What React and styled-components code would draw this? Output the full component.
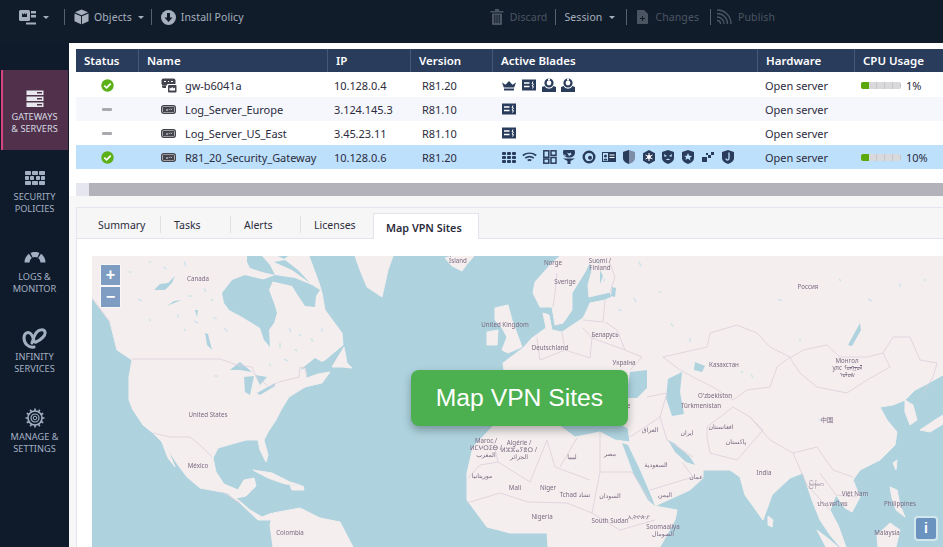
import React from 'react'
import styled, { createGlobalStyle } from 'styled-components'

const navy = '#2a3c5c'

const GlobalStyle = createGlobalStyle`
  html, body { margin: 0; padding: 0; height: 100%; overflow: hidden; background: #f7f7f8; }
  #root { height: 100%; }
  * { box-sizing: border-box; }
`

const Page = styled.div`
  width: 943px;
  height: 547px;
  overflow: hidden;
  display: flex;
  flex-direction: column;
  font-family: "Noto Sans", "Open Sans", sans-serif;
`

const Toolbar = styled.div`
  height: 43px;
  flex: none;
  background: #111c2b;
  display: flex;
  align-items: flex-start;
  justify-content: space-between;
  padding: 9px 168px 0 19px;
`

const ToolGroup = styled.div`
  display: flex;
  align-items: center;
  height: 16px;
`

const ToolItem = styled.div`
  display: flex;
  align-items: center;
  gap: ${props => props.$gap || 5}px;
  font-size: 10.5px;
  letter-spacing: 0.1px;
  color: ${props => (props.$off ? '#4b5562' : '#a6b0bd')};
  svg { flex: none; }
`

const ToolDivider = styled.span`
  width: 1px;
  height: 16px;
  background: #56606e;
  margin: ${props => props.$margin || '0 9px'};
`

const Caret = styled.i`
  width: 0;
  height: 0;
  border-left: 3px solid transparent;
  border-right: 3px solid transparent;
  border-top: 3px solid ${props => props.$color || '#a6b0bd'};
  margin-left: ${props => props.$left || 0}px;
`

const Body = styled.div`
  flex: 1;
  display: flex;
  min-height: 0;
`

const Sidebar = styled.nav`
  width: 69px;
  flex: none;
  background: #0f1b2a;
  padding: 27px 1px 0;
`

const NavItem = styled.div`
  height: 80px;
  display: flex;
  flex-direction: column;
  align-items: center;
  padding-top: 17px;
  gap: 2px;
  background: ${props => (props.$active ? '#50304a' : 'transparent')};
  box-shadow: ${props => (props.$active ? 'inset 2px 0 0 #d6457e' : 'none')};
`

const NavIcon = styled.div`
  height: 22px;
  display: flex;
  align-items: center;
`

const NavLabel = styled.div`
  font-size: 9.2px;
  line-height: 12px;
  text-align: center;
  white-space: pre-line;
  color: ${props => (props.$active ? '#d5dae2' : '#a3b0c4')};
`

const Main = styled.div`
  flex: 1;
  min-width: 0;
  display: flex;
  flex-direction: column;
  padding-left: 7px;
  background: #f7f7f8;
`

const TableArea = styled.div`
  height: 153px;
  flex: none;
  margin-left: -7px;
  padding: 6px 0 0 7px;
  background: #fff;
`

const Row = styled.div`
  display: grid;
  grid-template-columns: 62px 189px 83px 82px 265px 97px 89px;
  height: ${props => (props.$head ? 23 : 24)}px;
  margin-bottom: ${props => (props.$head ? 1 : 0)}px;
  align-items: center;
  background: ${props => props.$bg || '#fff'};
`

const HeadCell = styled.div`
  height: 100%;
  display: flex;
  align-items: center;
  padding-left: ${props => (props.$first ? 7 : 8)}px;
  font-size: 11.5px;
  font-weight: 600;
  color: #fff;
  background: ${navy};
  border-left: 1px solid ${props => (props.$first ? navy : '#44587a')};
`

const Cell = styled.div`
  display: flex;
  align-items: center;
  padding-left: ${props => props.$left || 0}px;
  font-size: 11px;
  letter-spacing: -0.05px;
  color: #2c2c3c;
  justify-content: ${props => (props.$center ? 'center' : 'flex-start')};
  white-space: nowrap;
`

const RowIcon = styled.span`
  width: 24px;
  display: flex;
`

const Blades = styled.div`
  display: flex;
  gap: 5.8px;
  color: ${navy};
  svg { flex: none; display: block; }
`

const Dash = styled.span`
  width: 10px;
  height: 3px;
  background: #a9a9ae;
  border-radius: 1px;
`

const CpuBar = styled.div`
  width: 40px;
  height: 7px;
  border-radius: 2px;
  margin-right: 5px;
  background: repeating-linear-gradient(90deg, #d9d9dc 0 7px, #c6c6ca 7px 8px);
  overflow: hidden;
`

const CpuFill = styled.div`
  height: 100%;
  background: #5aa80c;
`

const ScrollBar = styled.div`
  height: 13px;
  flex: none;
  margin-top: 14px;
  display: flex;
  background: #b3b2bb;
  &::before { content: ''; width: 13px; background: #e6e6f0; }
`

const Panel = styled.section`
  flex: 1;
  min-height: 0;
  margin-top: 11px;
  border: 1px solid #e5e5ef;
  border-right: none;
  border-bottom: none;
  background: #fff;
  display: flex;
  flex-direction: column;
`

const TabBar = styled.div`
  height: 31px;
  flex: none;
  display: flex;
  align-items: flex-end;
  padding-left: 8px;
  background: #f6f6f7;
  border-bottom: 1px solid #e3e3ee;
`

const Tab = styled.div`
  width: ${props => props.$width}px;
  height: 30px;
  display: flex;
  align-items: center;
  padding: 4px 0 0 13px;
  font-size: 10.5px;
  color: #2c2c3c;
`

const ActiveTab = styled(Tab)`
  height: 26px;
  font-size: 10.8px;
  font-weight: 600;
  position: relative;
  top: 1px;
  background: #fff;
  border: 1px solid #e3e3ee;
  border-bottom: none;
  padding: 2px 0 0 12px;
`

const TabSep = styled.span`
  width: 1px;
  height: 17px;
  margin-bottom: 5px;
  background: #e0e0e4;
`

const MapWrap = styled.div`
  flex: 1;
  min-height: 0;
  margin: 17px 0 0 15px;
  position: relative;
  overflow: hidden;
  background: #aed3df;
`

const MapSvg = styled.svg`
  display: block;
  width: 851px;
  height: 291px;
  filter: blur(0.35px);
`

const ZoomBox = styled.div`
  position: absolute;
  left: 8px;
  top: 8px;
  padding: 1px;
  width: 21px;
  background: rgba(255, 255, 255, 0.55);
  border-radius: 3px;
  display: flex;
  flex-direction: column;
  gap: 2px;
`

const ZoomBtn = styled.div`
  height: 20px;
  background: #7f9dc2;
  color: #fff;
  font: bold 16px/19px "Liberation Sans", sans-serif;
  text-align: center;
`

const InfoBtn = styled.div`
  position: absolute;
  right: 7px;
  bottom: 8px;
  width: 20px;
  height: 21px;
  background: #6a94bf;
  border-radius: 2px;
  box-shadow: 0 0 0 2px rgba(255, 255, 255, 0.45);
  color: #fff;
  font: bold 14px/21px "Liberation Sans", sans-serif;
  text-align: center;
`

const CtaButton = styled.div`
  position: absolute;
  left: 319px;
  top: 114px;
  width: 217px;
  height: 56px;
  display: flex;
  align-items: center;
  justify-content: center;
  border-radius: 8px;
  background: #4caf50;
  box-shadow: 0 4px 8px rgba(0, 0, 0, 0.3);
  color: #fff;
  font: 24.7px "Liberation Sans", Arial, sans-serif;
`

// toolbar icons
const GatewayMenuIcon = () => (
  <svg width="17" height="15" viewBox="0 0 17 15" fill="#a6b0bd">
    <rect x="0" y="0" width="11" height="11" rx="1.5" />
    <path d="M3 3l1.5 1.5L5.5 3l1 1.5L8 3v4H3z" fill="#111c2b" />
    <rect x="12" y="1" width="5" height="2.5" />
    <rect x="12" y="5" width="5" height="2.5" />
    <rect x="7" y="12.5" width="10" height="2" />
  </svg>
)

const BoxIcon = () => (
  <svg width="15" height="16" viewBox="0 0 16 16" fill="#a6b0bd">
    <path d="M8 0l7 3-7 3-7-3z" />
    <path d="M0.5 4.2l7 3v8.6l-7-3.2z" />
    <path d="M15.5 4.2l-7 3v8.6l7-3.2z" />
  </svg>
)

const InstallIcon = () => (
  <svg width="15" height="15" viewBox="0 0 15 15">
    <circle cx="7.5" cy="7.5" r="7.5" fill="#a6b0bd" />
    <path d="M6 3h3v4.5h2.5L7.5 12 3.5 7.5H6z" fill="#111c2b" />
  </svg>
)

const TrashIcon = () => (
  <svg width="14" height="16" viewBox="0 0 14 16" fill="#4b5562">
    <rect x="0.5" y="2" width="13" height="1.5" />
    <rect x="5" y="0" width="4" height="2" />
    <path d="M2 4.5h10V15a1 1 0 0 1-1 1H3a1 1 0 0 1-1-1zM4.300 6v8h1V6zm2.200 0v8h1V6zm2.200 0v8h1V6z" fillRule="evenodd" />
  </svg>
)

const ChangesIcon = () => (
  <svg width="11" height="14" viewBox="0 0 11 14" fill="#4b5562">
    <path d="M0 1a1 1 0 0 1 1-1h6l4 4v9a1 1 0 0 1-1 1H1a1 1 0 0 1-1-1z" />
    <path d="M5 6h1v2h2v1H6v2H5V9H3V8h2z" fill="#111c2b" />
  </svg>
)

const RssIcon = () => (
  <svg width="16" height="16" viewBox="0 0 16 16" fill="none" stroke="#4b5562" strokeWidth="1.3">
    <path d="M1 1c8 0 14 6 14 14" />
    <path d="M1 4.500c6 0 10.500 4.500 10.500 10.500" />
    <path d="M1 8c4 0 7 3 7 7" />
    <path d="M1 11.500c2 0 3.500 1.500 3.500 3.500" />
  </svg>
)

// sidebar icons
const ServersIcon = () => (
  <svg width="18" height="17" viewBox="0 0 18 17">
    {[0, 6, 12].map(y => (
      <g key={y}>
        <rect x="0.5" y={y + 0.5} width="17" height="4.5" fill="#e6e8ee" />
        <rect x="11" y={y + 2} width="5" height="1.5" fill="#50304a" />
      </g>
    ))}
  </svg>
)

const WallIcon = () => (
  <svg width="20" height="15" viewBox="0 0 20 15" fill="#a3b0c4">
    {[[0, 6], [7, 6], [14, 6], [0, 4], [5, 4], [11, 4], [16, 4], [0, 6], [7, 6], [14, 6]].map(([x, w], i) => (
      <rect key={i} x={x} y={i < 3 ? 0 : i < 7 ? 5 : 10} width={w} height="4" rx="0.8" />
    ))}
  </svg>
)

const GaugeIcon = () => (
  <svg width="22" height="13" viewBox="0 2.5 22 13" fill="none" stroke="#a3b0c4" strokeWidth="5">
    <path d="M3 13A8 8 0 0 1 6.400 6.400" />
    <path d="M7.600 5.750A8 8 0 0 1 14.400 5.750" />
    <path d="M15.600 6.400A8 8 0 0 1 19 13" />
  </svg>
)

const InfinityIcon = () => (
  <svg width="25" height="21" viewBox="0 0 25 21" fill="none" stroke="#a3b0c4" strokeWidth="3" strokeLinecap="round">
    <path d="M12 19C6 20 2 15 2 10C2 5 6 3 9 6C12 9 11 15 14 14C19 12 24 7 23 4C22 1 17 1 14 5C12 8 11 12 10 15" />
  </svg>
)

const GearIcon = () => (
  <svg width="20" height="20" viewBox="0 0 20 20" fill="none" stroke="#a3b0c4">
    <circle cx="10" cy="10" r="7" strokeWidth="1.6" />
    <circle cx="10" cy="10" r="4" strokeWidth="1.2" />
    <circle cx="10" cy="10" r="1.8" strokeWidth="1" />
    <g strokeWidth="1.6">
      {[0, 30, 60, 90, 120, 150].map(a => (
        <path key={a} d="M10 0.500v2.500M10 17v2.500" transform={`rotate(${a} 10 10)`} />
      ))}
    </g>
  </svg>
)

// table icons
const CheckIcon = () => (
  <svg width="13" height="13" viewBox="0 0 13 13">
    <circle cx="6.5" cy="6.5" r="6.2" fill="#5cb018" />
    <path d="M3.300 6.700l2.300 2.200 4.100-4.300" fill="none" stroke="#fff" strokeWidth="1.7" />
  </svg>
)

const ServerIcon = () => (
  <svg width="15" height="9" viewBox="0 0 15 9">
    <rect x="0.7" y="0.7" width="13.6" height="7.6" rx="2" fill="#f4f4f4" stroke="#44444c" strokeWidth="1.4" />
    <rect x="2" y="2" width="11" height="5" fill="#44444c" />
    <path d="M5 5h2M8 4.800l1-1M10 4.800l1-1" stroke="#fff" strokeWidth="0.9" />
  </svg>
)

const GatewayIcon = () => (
  <svg width="16" height="15" viewBox="0 0 16 15">
    <rect x="0.5" y="0.5" width="14" height="7" rx="2" fill="#44444c" />
    <path d="M3 3.500h2M7 3.500h1M10 3.500h2" stroke="#fff" strokeWidth="1" />
    <path d="M1 7.500h4v2.500H2.500A1.500 1.500 0 0 1 1 8.500z" fill="#44444c" />
    <rect x="6" y="6" width="10" height="9" rx="1" fill="#fff" />
    <rect x="7" y="7" width="8.5" height="7.5" rx="1" fill="#44444c" />
    <path d="M8.500 9.500l1.500 1 1.200-1.500 1.300 1.500 1.500-1v3h-5.500z" fill="#fff" />
  </svg>
)

const CrownBlade = () => (
  <svg width="14" height="14" viewBox="0 0 14 14" fill="currentColor">
    <path d="M0 4.500l3.500 2.300L7 3l3.500 3.800L14 4.500l-1.800 5H1.800z" />
    <rect x="2" y="10.5" width="10" height="2" />
  </svg>
)

const ReportBlade = () => (
  <svg width="14" height="14" viewBox="0 0 14 14">
    <rect y="1.5" width="14" height="11" fill="currentColor" />
    <path d="M2 5h5.500M2 8.500h5.500" stroke="#fff" strokeWidth="1.4" />
    <path d="M11 3.500l-1 2 1.500.5-1.500 2 1.500.5-1 2" stroke="#fff" strokeWidth="1" fill="none" />
  </svg>
)

const RingBlade = () => (
  <svg width="14" height="15" viewBox="0 0 14 15">
    <path d="M0 9l2.500-1a5 5 0 0 0 9 0L14 9v5H0z" fill="currentColor" />
    <circle cx="7" cy="5" r="3.5" fill="none" stroke="currentColor" strokeWidth="2.2" />
    <path d="M6 0.500h2v2H6z" fill="#fff" />
  </svg>
)

const GridBlade = () => (
  <svg width="14" height="14" viewBox="0 0 14 14" fill="currentColor">
    {[2, 6, 10].map(y => [0, 5, 10].map(x => <rect key={`${x}${y}`} x={x} y={y} width="4" height="3" rx="1" />))}
  </svg>
)

const WifiBlade = () => (
  <svg width="15" height="14" viewBox="0 0 15 14" fill="none" stroke="currentColor" strokeWidth="1.7">
    <path d="M0.800 5.500c4-3 9.400-3 13.400 0" />
    <path d="M3.300 8c2.500-1.700 6-1.700 8.400 0" />
    <path d="M5.700 10.500c1-.7 2.600-.7 3.600 0" />
  </svg>
)

const QrBlade = () => (
  <svg width="14" height="14" viewBox="0 0 14 14" fill="none" stroke="currentColor" strokeWidth="1.5">
    <rect x="0.8" y="0.8" width="5" height="6.5" />
    <rect x="8" y="0.8" width="5" height="4.5" />
    <rect x="0.8" y="9" width="5" height="4.2" />
    <rect x="8" y="7.5" width="5" height="5.7" />
  </svg>
)

const GlobeBlade = () => (
  <svg width="14" height="15" viewBox="0 0 14 15" fill="currentColor">
    <path d="M1 1.500a6 6 0 0 1 12 0c0 3-2.500 5-6 5s-6-2-6-5z" transform="translate(0 1)" />
    <path d="M5 2.500l2 1 1.500-1 1 2-2.500 1.500zM2 4.500l2 .5-1 1.500z" fill="#bde0fd" />
    <path d="M1 8.500h12L8.500 11v3h-3v-3z" />
  </svg>
)

const TargetBlade = () => (
  <svg width="14" height="14" viewBox="0 0 14 14">
    <circle cx="7" cy="7" r="5.3" fill="none" stroke="currentColor" strokeWidth="2.4" />
    <circle cx="8" cy="7.8" r="2" fill="currentColor" />
  </svg>
)

const CardBlade = () => (
  <svg width="14" height="14" viewBox="0 0 14 14">
    <rect y="2" width="14" height="10" fill="currentColor" />
    <rect x="1" y="3" width="5" height="8" fill="#bde0fd" />
    <circle cx="3.5" cy="6" r="1.5" fill="currentColor" />
    <path d="M1.500 10.500a2 2 0 0 1 4 0z" fill="currentColor" />
    <path d="M7.500 5h5M7.500 7.500h5" stroke="#fff" strokeWidth="1" />
  </svg>
)

const shield = 'M7 0l6 2v6c0 3-3 5-6 6-3-1-6-3-6-6V2z'

const HalfShieldBlade = () => (
  <svg width="14" height="14" viewBox="0 0 14 14">
    <path d={shield} fill="#7d8da8" />
    <path d="M7 0L1 2v6c0 3 3 5 6 6z" fill="currentColor" />
  </svg>
)

const HexBlade = () => (
  <svg width="14" height="14" viewBox="0 0 14 14">
    <path d="M7 0l6 3.300v7.400L7 14l-6-3.300V3.300z" fill="currentColor" />
    <circle cx="7" cy="7" r="2" fill="#fff" />
    <path d="M7 3v8M3.500 5l7 4M10.500 5l-7 4" stroke="#fff" strokeWidth="1" />
  </svg>
)

const FaceBlade = () => (
  <svg width="14" height="14" viewBox="0 0 14 14">
    <path d={shield} fill="currentColor" />
    <path d="M3 4l3 2-2.500 1zM11 4L8 6l2.500 1zM4.500 10l2.500-1.500L9.500 10z" fill="#bde0fd" />
  </svg>
)

const StarBlade = () => (
  <svg width="14" height="14" viewBox="0 0 14 14">
    <path d={shield} fill="currentColor" />
    <path d="M7 3l1.200 2.700 2.800.3-2.100 1.900.6 2.800L7 8.400l-2.500 1.300.6-2.800L3 6l2.800-.3z" fill="#bde0fd" />
  </svg>
)

const BitsBlade = () => (
  <svg width="14" height="14" viewBox="0 0 14 14" fill="currentColor">
    <rect x="1" y="7" width="5" height="5" />
    <rect x="7" y="5" width="3" height="3" />
    <rect x="10" y="2" width="3" height="3" />
    <rect x="5" y="3" width="2" height="2" />
  </svg>
)

const HookBlade = () => (
  <svg width="14" height="14" viewBox="0 0 14 14">
    <path d={shield} fill="currentColor" />
    <path d="M8 2.500v6a1.500 1.500 0 0 1-3 0" fill="none" stroke="#bde0fd" strokeWidth="1.3" />
  </svg>
)

const columns = ['Status', 'Name', 'IP', 'Version', 'Active Blades', 'Hardware', 'CPU Usage']

const rows = [
  { ok: true, icon: <GatewayIcon />, name: 'gw-b6041a', ip: '10.128.0.4', version: 'R81.20', cpu: 1, bg: '#fff',
    blades: [CrownBlade, ReportBlade, RingBlade, RingBlade] },
  { icon: <ServerIcon />, name: 'Log_Server_Europe', ip: '3.124.145.3', version: 'R81.10', bg: '#f6f7fd',
    blades: [ReportBlade] },
  { icon: <ServerIcon />, name: 'Log_Server_US_East', ip: '3.45.23.11', version: 'R81.10', bg: '#fff',
    blades: [ReportBlade] },
  { ok: true, icon: <ServerIcon />, name: 'R81_20_Security_Gateway', ip: '10.128.0.6', version: 'R81.20', cpu: 10, bg: '#bde0fd',
    blades: [GridBlade, WifiBlade, QrBlade, GlobeBlade, TargetBlade, CardBlade, HalfShieldBlade, HexBlade, FaceBlade, StarBlade, BitsBlade, HookBlade] }
]

const navItems = [
  { icon: <ServersIcon />, label: 'GATEWAYS\n& SERVERS', active: true },
  { icon: <WallIcon />, label: 'SECURITY\nPOLICIES' },
  { icon: <GaugeIcon />, label: 'LOGS &\nMONITOR' },
  { icon: <InfinityIcon />, label: 'INFINITY\nSERVICES' },
  { icon: <GearIcon />, label: 'MANAGE &\nSETTINGS' }
]

// map drawing, in page coordinates
const land = [
  'M92 256H309L319 283L322 293L325 310L342 333L343 345L325 360L300 370L305 368L307 378L318 374L330 372L322 383L305 387L289 397L281 410L276 420L268 432L264 440L268 455L266 462L260 450L258 440L246 440L232 444L218 448L213 458L216 472L224 484L238 490L244 480L254 478L256 486L246 496L236 498L250 510L262 517L272 513L272 520L258 520L240 503L227 493L200 488L187 477L178 465L165 445L153 433L143 425L133 410L129 400L129 377L132 360L117 350L110 322L92 298Z',
  'M355 256H393L388 270L382 297L367 287L360 270Z',
  'M445 258L452 256H474L467 264L462 271L452 266Z',
  'M495 308L508 305L512 320L522 347L508 353L502 350L507 337L502 328L495 320Z',
  'M487 332L498 330L497 345L487 345Z',
  'M332 367L344 347L347 363L352 368L342 367Z',
  'M253 470L272 473L290 482L300 485L285 484L268 478Z',
  'M290 485L303 486L304 490L292 490Z',
  'M160 437L166 445L175 467L168 458Z',
  'M273 513L300 508L320 518L340 522L353 547H273L270 525Z',
  'M943 256H560L552 263L535 282L533 293L540 307L552 307L555 325L563 323L572 310L572 293L585 272L590 262L592 270L588 285L589 297L610 292L612 297L605 300L590 303L587 310L583 318L562 332L552 330L549 315L543 313L546 328L532 338L523 348L503 363L504 370L505 424H620L628 428L630 442L615 440L600 432L575 437L560 426H493L473 447L467 473L467 500L487 527L510 533L547 533L548 547H660L675 520L677 510L655 506L668 500L690 490L703 478L703 470H730L740 477L745 495L763 520L772 495L790 478L803 473L807 485L812 500L820 520L830 535L840 547H846L838 525L830 510L836 495L845 508L852 512L860 497L853 480L860 470L880 460L895 445L897 432L887 420L880 407L893 405L905 400L915 390L925 385L943 375Z',
  'M905 400L913 405L917 420L910 425L905 412Z',
  'M920 430L935 420L943 415V424L930 432Z',
  'M893 463L897 460L896 470Z',
  'M768 516L773 520L772 527L768 525Z',
  'M890 487L897 490L900 505L905 517L896 510L892 498Z',
  'M877 535L890 523L900 530L896 547H878Z',
  'M817 530L830 540L838 547H826Z'
]

const water = [
  // hudson bay and the arctic channels
  'M222 293L232 280L245 275L265 280L274 278L269 290L274 303L277 313L274 323L269 330L270 347L264 340L260 328L242 317L229 310L224 303Z',
  'M262 280L275 275L295 278L312 285L320 290L316 296L315 307L305 306L299 297L292 286L275 282Z',
  'M247 256H262L270 265L275 275L262 272L250 268L247 262Z',
  'M274 262L292 270L310 283L298 270L285 260Z',
  'M278 256H288L284 259Z',
  // st lawrence
  'M300 370L315 358L322 362L310 368L305 368Z',
  // great lakes
  'M230 370L240 362L252 372L240 370Z',
  'M244 377L254 376L250 395L245 392Z',
  'M255 375L267 377L260 385Z',
  'M257 393L275 383L275 386L260 395Z',
  // canadian lakes
  'M154 290L160 284L168 283L175 276L172 283L165 290Z',
  'M167 306L174 301L182 300L174 303Z',
  'M205 333L208 334L212 350L207 345Z',
  'M195 310L198 310L197 317Z',
  // europe and asia
  'M630 372L647 370L647 388L637 398L628 398L628 385Z',
  'M668 379L682 372L680 392L684 414L672 416L666 398Z',
  'M622 443L628 445L640 470L652 498L655 506L648 500L634 475Z',
  'M668 440L674 443L690 457L695 465L686 462L675 452Z',
  'M848 345L860 323L861 330L852 346Z',
  'M695 362L705 366L702 372L694 370Z',
  'M612 287L616 288L615 297L611 296Z',
  'M600 270L603 276L600 284Z'
]

const specks = [
  [150, 262], [165, 268], [185, 264], [130, 272], [205, 290], [190, 296], [212, 300], [178, 316], [196, 322], [185, 330],
  [215, 318], [226, 330], [150, 320], [140, 300], [290, 330], [300, 335], [312, 340], [280, 345], [296, 350], [322, 330],
  [286, 360], [270, 365], [216, 376], [598, 262], [604, 280], [620, 310], [635, 300], [660, 292], [672, 325], [690, 340],
  [742, 372], [752, 376], [780, 300], [840, 280], [900, 285], [870, 300], [800, 340], [820, 420], [640, 264], [925, 280]
]

const borders = [
  '663,357 707,347 710,333 737,325 757,333 770,347 790,357 777,367 770,387 747,390 733,400 713,387 693,377 680,370 663,357',
  '790,358 803,350 827,345 840,357 867,357 883,353 890,367 867,380 847,393 817,387 800,373 790,358',
  '883,353 893,337 910,337 920,360 937,363 933,377 923,393',
  '750,417 770,440 793,453 817,447 833,470 853,477',
  '707,437 710,453 737,460 763,430 750,417 733,407 707,427 707,437',
  '660,417 667,440 693,457',
  '630,437 660,417 667,393 647,397',
  '650,490 693,477 682,462',
  '605,322 617,330 625,350 642,357 630,370',
  '557,273 555,293 553,307',
  '610,263 615,277 610,292',
  '583,320 603,322 605,300',
  '562,332 565,350 590,358 592,338 583,328',
  '592,338 625,350',
  '537,338 540,360',
  '565,350 540,360',
  '600,472 632,472 650,500',
  '600,472 592,513 567,503 528,502 500,493 467,503',
  '498,462 530,482 547,440 555,467 590,480',
  '493,440 498,462 480,465 468,478',
  '600,432 600,472',
  '577,438 560,467',
  '592,513 620,530 655,520',
  '793,453 807,485 830,510',
  '820,473 836,495 857,497',
  '132,359 220,359 237,365 252,367 255,375 269,387 279,382 299,377 300,367 305,368 307,378',
  '92,298 110,322',
  '153,433 170,437 190,437 200,445 212,457',
  '222,492 240,503'
]

// x, first baseline, then the lines of the label
const labels = [
  [198, 281, 'Canada'], [208, 417, 'United States'], [198, 468, 'México'], [290, 535, 'Colombia'],
  [458, 263, 'Ísland'], [553, 265, 'Norge'], [565, 284, 'Sverige'], [600, 263, 'Suomi /', 'Finland'],
  [505, 327, 'United Kingdom'], [550, 350, 'Deutschland'], [605, 337, 'Беларусь'], [624, 365, 'Україна'],
  [808, 289, 'Россия'], [724, 367, 'Казахстан'], [847, 363, 'Монгол', 'улс ᠮᠤᠩᠭᠤᠯ', 'ᠤᠯᠤᠰ'],
  [715, 398, "O'zbekiston"], [701, 408, 'Türkmenistan'], [827, 422, '中国'], [764, 475, 'India'],
  [687, 435, 'ایران'], [650, 432, 'العراق'], [721, 429, 'افغانستان'], [736, 444, 'پاکستان'], [656, 467, 'السعودية'],
  [610, 456, 'مصر'], [572, 459, 'ليبيا'], [519, 445, 'Algérie /', 'ⵍⵣⵣⴰⵢⴻⵔ /', 'الجزائر'],
  [486, 443, 'Maroc /', 'ⵍⵎⵖⵔⵉⴱ /', 'المغرب'], [482, 478, 'موريتانيا'], [515, 490, 'Mali'],
  [548, 490, 'Niger'], [575, 497, 'Tchad تشاد'], [542, 519, 'Nigeria'], [610, 523, 'South Sudan'], [610, 498, 'السودان'],
  [665, 497, 'اليمن'], [696, 479, 'عمان'], [639, 519, 'ኢትዮጵያ'], [663, 529, 'Soomaaliya', 'الصومال'],
  [816, 486, 'မြန်မာ'], [855, 496, 'Việt Nam'], [832, 506, 'ประเทศไทย'], [900, 506, 'Philippines'], [887, 535, 'Malaysia'],
  [620, 408, 'Türkiye']
]

const WorldMap = () => (
  <MapSvg viewBox="92 256 851 291">
    <rect x="92" y="256" width="851" height="291" fill="#aed3df" />
    {land.map((d, i) => <path key={i} d={d} fill="#f4eeee" stroke="#f4eeee" strokeLinejoin="round" />)}
    {water.map((d, i) => <path key={i} d={d} fill="#aed3df" strokeLinejoin="round" />)}
    {specks.map(([x, y], i) => <ellipse key={i} cx={x} cy={y} rx={1.6 + (i % 3) * 0.6} ry="0.8" fill="#cfe4ea" transform={`rotate(${(i * 37) % 90} ${x} ${y})`} />)}
    {borders.map((p, i) => <polyline key={i} points={p} fill="none" stroke="#dccfda" strokeWidth="0.8" />)}
    <g fontFamily='"Noto Sans", "DejaVu Sans", "Noto Sans CJK SC", sans-serif' fontSize="6.2" fill="#7b6a82" textAnchor="middle">
      {labels.map(([x, y, ...lines]) => (
        <text key={lines[0]} x={x} y={y}>
          {lines.map((line, i) => <tspan key={line} x={x} dy={i ? 7 : 0}>{line}</tspan>)}
        </text>
      ))}
    </g>
  </MapSvg>
)

const TableRow = ({ row }) => (
  <Row $bg={row.bg}>
    <Cell $center>{row.ok ? <CheckIcon /> : <Dash />}</Cell>
    <Cell $left={23}>
      <RowIcon>{row.icon}</RowIcon>
      {row.name}
    </Cell>
    <Cell $left={7}>{row.ip}</Cell>
    <Cell $left={12}>{row.version}</Cell>
    <Cell $left={10}>
      <Blades>{row.blades.map((Blade, i) => <Blade key={i} />)}</Blades>
    </Cell>
    <Cell $left={8}>Open server</Cell>
    <Cell $left={7}>
      {row.cpu && (
        <>
          <CpuBar><CpuFill style={{ width: 8 }} /></CpuBar>
          {row.cpu}%
        </>
      )}
    </Cell>
  </Row>
)

export default function App () {
  return (
    <Page>
      <GlobalStyle />
      <Toolbar>
        <ToolGroup>
          <ToolItem $gap={7}><GatewayMenuIcon /><Caret /></ToolItem>
          <ToolDivider $margin="0 9px 0 15px" />
          <ToolItem><BoxIcon />Objects<Caret $left={1} /></ToolItem>
          <ToolDivider $margin="0 9px 0 7px" />
          <ToolItem><InstallIcon />Install Policy</ToolItem>
        </ToolGroup>
        <ToolGroup>
          <ToolItem $off $gap={6}><TrashIcon />Discard</ToolItem>
          <ToolDivider $margin="0 8px" />
          <ToolItem $gap={7}>Session<Caret /></ToolItem>
          <ToolDivider $margin="0 10px 0 11px" />
          <ToolItem $off $gap={7}><ChangesIcon />Changes</ToolItem>
          <ToolDivider $margin="0 5px 0 11px" />
          <ToolItem $off $gap={6}><RssIcon />Publish</ToolItem>
        </ToolGroup>
      </Toolbar>
      <Body>
        <Sidebar>
          {navItems.map(item => (
            <NavItem key={item.label} $active={item.active}>
              <NavIcon>{item.icon}</NavIcon>
              <NavLabel $active={item.active}>{item.label}</NavLabel>
            </NavItem>
          ))}
        </Sidebar>
        <Main>
          <TableArea>
            <Row $head>
              {columns.map((name, i) => <HeadCell key={name} $first={i === 0}>{name}</HeadCell>)}
            </Row>
            {rows.map(row => <TableRow key={row.name} row={row} />)}
            <ScrollBar />
          </TableArea>
          <Panel>
            <TabBar>
              <Tab $width={75}>Summary</Tab><TabSep />
              <Tab $width={69}>Tasks</Tab><TabSep />
              <Tab $width={69}>Alerts</Tab><TabSep />
              <Tab $width={72}>Licenses</Tab>
              <ActiveTab $width={106}>Map VPN Sites</ActiveTab>
            </TabBar>
            <MapWrap>
              <WorldMap />
              <ZoomBox>
                <ZoomBtn>+</ZoomBtn>
                <ZoomBtn>−</ZoomBtn>
              </ZoomBox>
              <CtaButton>Map VPN Sites</CtaButton>
              <InfoBtn>i</InfoBtn>
            </MapWrap>
          </Panel>
        </Main>
      </Body>
    </Page>
  )
}
